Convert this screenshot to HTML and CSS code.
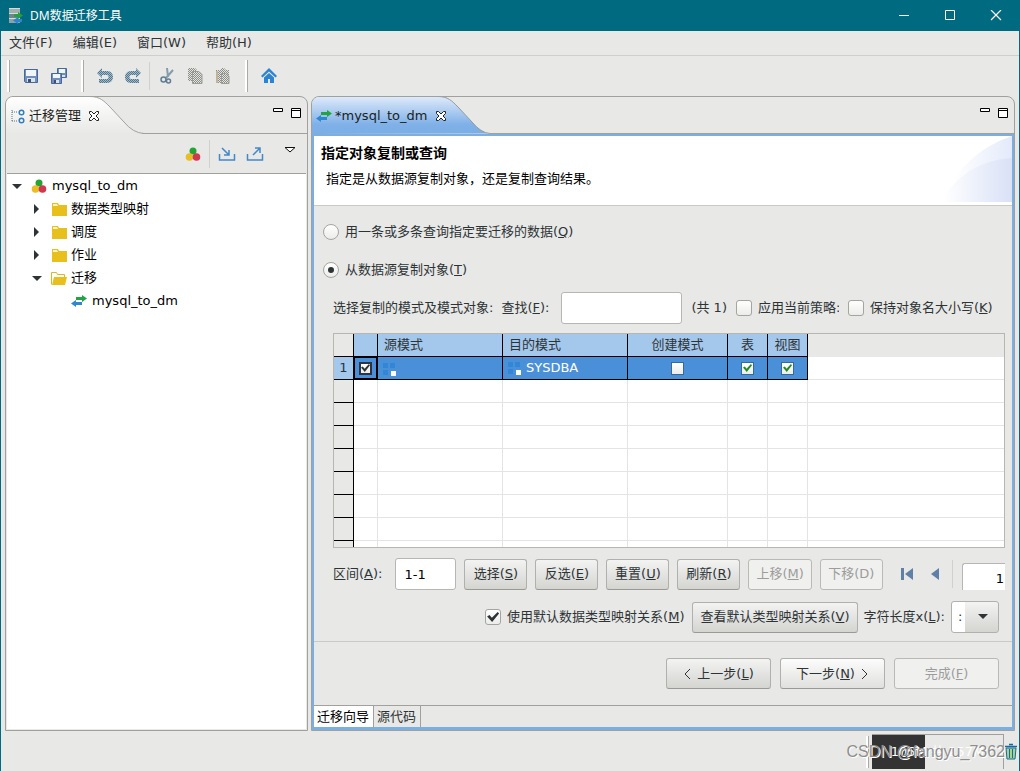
FILE: index.html
```html
<!DOCTYPE html>
<html lang="zh-CN">
<head>
<meta charset="utf-8">
<title>DM数据迁移工具</title>
<link rel="stylesheet" href="styles.css">
</head>
<body>
<header class="titlebar">
  <svg class="app-icon" width="16" height="18" viewBox="0 0 16 18"><path d="M1 1h11v5H1z" fill="#9fb0b0"/><path d="M1 6h11v5H1z" fill="#70848a"/><path d="M1 11h11v5H1z" fill="#8ea3a8"/><path d="M1 1h11v1H1zM1 6h11v1H1zM1 11h11v1H1z" fill="#d5dcdc"/><path d="M6 7h4V5l5 3.500-5 3.500v-2H6z" fill="#25a03c"/><path d="M14 12h-4v-2l-5 3.500 5 3.500v-2h4z" fill="#2e83cf"/></svg>
  <h1>DM数据迁移工具</h1>
  <div class="window-buttons">
    <button aria-label="最小化"><svg width="12" height="12"><path d="M1 5.500h10" stroke="#fff"/></svg></button>
    <button aria-label="最大化"><svg width="12" height="12"><path d="M1.500.500h9v9h-9z" fill="none" stroke="#fff"/></svg></button>
    <button aria-label="关闭"><svg width="12" height="12"><path d="M1 0l10 10M11 0L1 10" stroke="#fff" stroke-width="1.200"/></svg></button>
  </div>
</header>
<nav class="menubar">
  <button>文件(F)</button><button>编辑(E)</button><button>窗口(W)</button><button>帮助(H)</button>
</nav>
<div class="toolbar">
  <span class="grip"></span>
  <div class="tools">
    <button aria-label="保存"><svg width="16" height="16"><path d="M1.500 1.500h13v13h-12l-1-1z" fill="#6f8fbe" stroke="#4b6798"/><path d="M3 2h10v6H3z" fill="#f0f5fa"/><path d="M4 10h8v4H4z" fill="#dbe3ea"/><path d="M5 11h3v3H5z" fill="#3d5273"/></svg></button>
    <button aria-label="全部保存"><svg width="18" height="16"><path d="M7.500.500h9v9h-9z" fill="#6f8fbe" stroke="#4b6798"/><path d="M9 1h6v4H9z" fill="#f0f5fa"/><path d="M12 7h3v2h-3z" fill="#dbe3ea"/><path d="M1.500 5.500h10v10h-10z" fill="#6f8fbe" stroke="#4b6798"/><path d="M3 6h7v4H3z" fill="#f0f5fa"/><path d="M4 12h5v3H4z" fill="#dbe3ea"/><path d="M4 12h2v3H4z" fill="#3d5273"/></svg></button>
  </div>
  <span class="grip"></span>
  <div class="tools">
    <button aria-label="撤销"><svg width="18" height="16"><defs><pattern id="dim-blue" width="2" height="2" patternUnits="userSpaceOnUse"><path d="M0 0h2v2H0z" fill="#a4b9c5"/><path d="M0 0h1v1H0zM1 1h1v1H1z" fill="#4f7890"/></pattern><pattern id="dim-gray" width="2" height="2" patternUnits="userSpaceOnUse"><path d="M0 0h2v2H0z" fill="#e4e4df"/><path d="M0 0h1v1H0zM1 1h1v1H1z" fill="#8b8d89"/></pattern></defs><path d="M1 5l5-5v3h5c8 0 8 12 0 12H3v-4h8c2 0 2-4 0-4H6v3z" fill="url(#dim-blue)"/></svg></button>
    <button aria-label="重做"><svg width="18" height="16"><path d="M17 5l-5-5v3H7c-8 0-8 12 0 12h8v-4H7c-2 0-2-4 0-4h5v3z" fill="url(#dim-blue)"/></svg></button>
  </div>
  <span class="divider"></span>
  <div class="tools">
    <button aria-label="剪切"><svg width="16" height="18"><path d="M8 1l1 9M14 3l-7 8" stroke="#849cac" stroke-width="2"/><circle cx="4.500" cy="12.500" r="2.500" fill="none" stroke="#627c92" stroke-width="1.500"/><circle cx="9.500" cy="14" r="2" fill="none" stroke="#627c92" stroke-width="1.500"/></svg></button>
    <button aria-label="复制"><svg width="18" height="18"><path d="M2 1h7l2 2v11H2z" fill="url(#dim-gray)"/><path d="M6.500 4.500H13l3 3v9H6.500z" fill="url(#dim-gray)" stroke="#9a9c98"/></svg></button>
    <button aria-label="粘贴"><svg width="16" height="18"><path d="M1 3h4l2-2h2l2 2h3v13H1z" fill="url(#dim-gray)"/><path d="M6.500 6.500H11l3 3v7H6.500z" fill="url(#dim-gray)" stroke="#9a9c98"/><path d="M1 4h2v12H1z" fill="#c1b29b"/></svg></button>
  </div>
  <span class="grip"></span>
  <div class="tools">
    <button aria-label="主页"><svg width="18" height="16"><path d="M1 8l8-8 8 8-1.500 1.500L9 3.500 2.500 9.500z" fill="#2b83d3"/><path d="M4 9.500l5-4.500 5 4.500V15h-4v-4H8v4H4z" fill="#2b83d3"/></svg></button>
  </div>
</div>

<main class="workbench">
  <section class="view">
    <div class="tabs-row">
      <div class="view-tab">
        <svg class="tab-shape" width="138" height="38"><defs><linearGradient id="pale" x2="0" y2="1"><stop offset="0" stop-color="#fff"/><stop offset="1" stop-color="#e8e8e6"/></linearGradient></defs><path d="M0 38V7Q1 1 7 .5H84C94 .5 98 5 104 11L118 26Q127 37 138 37.500z" fill="url(#pale)"/><path d="M84 .5C94 .5 98 5 104 11L118 26Q127 37 138 37.500" fill="none" stroke="#a0a09c"/></svg>
        <svg width="14" height="16"><path d="M1 2v11M1 4h6M1 13h6" fill="none" stroke="#59708a" stroke-dasharray="1 1"/><g fill="none" stroke="#327fc5" stroke-width="1.500"><circle cx="10.500" cy="4.500" r="2.300"/><circle cx="10.500" cy="12.500" r="2.300"/></g></svg>
        <span>迁移管理</span>
        <button aria-label="关闭视图"><svg width="12" height="12"><path d="M1.500 1.500h2L6 4l2.500-2.500h2v2L8 6l2.500 2.500v2h-2L6 8l-2.500 2.500h-2v-2L4 6 1.500 3.500z" fill="#fff" stroke="#222"/></svg></button>
      </div>
      <div class="tab-fill">
        <button aria-label="最小化视图"><svg width="10" height="12"><path d="M.5 1.500h9v3h-9z" fill="#fff" stroke="#000"/></svg></button>
        <button aria-label="最大化视图"><svg width="10" height="12"><path d="M.5 1.500h9v9h-9zM0 3.500h10" fill="#fff" stroke="#000"/></svg></button>
      </div>
    </div>
    <div class="view-tools">
      <button aria-label="对象"><svg width="16" height="16"><circle cx="8" cy="5" r="3.500" fill="#23a536"/><circle cx="4.500" cy="11" r="3.800" fill="#e8bd25"/><circle cx="11.500" cy="11" r="3.800" fill="#cf384e"/></svg></button>
      <span class="divider short"></span>
      <button aria-label="导入"><svg width="18" height="16"><path d="M1.500 8v6h15V8M4 2l7 7M11 4v5H6" fill="none" stroke="#4389c8" stroke-width="1.500"/></svg></button>
      <button aria-label="导出"><svg width="18" height="16"><path d="M1.500 8v6h15V8M7 9l7-7M9 2h5v5" fill="none" stroke="#4389c8" stroke-width="1.500"/></svg></button>
      <button class="view-menu" aria-label="视图菜单"><svg width="12" height="8"><path d="M1 1.500h10L6 6z" fill="#fff" stroke="#111"/></svg></button>
    </div>
    <ul class="tree">
      <li><svg class="arrow" width="10" height="10"><path d="M0 3h10L5 8z"/></svg><svg width="16" height="16"><circle cx="8" cy="5" r="3.500" fill="#23a536"/><circle cx="4.500" cy="11" r="3.800" fill="#e8bd25"/><circle cx="11.500" cy="11" r="3.800" fill="#cf384e"/></svg><span>mysql_to_dm</span></li>
      <li class="level-2"><svg class="arrow" width="10" height="10"><path d="M2 0v10l5-5z"/></svg><svg width="16" height="16"><path d="M1 2h6l1 2h8v11H1z" fill="#e7c01e"/><path d="M2 3h4l1 2H2z" fill="#fff5c5"/></svg><span>数据类型映射</span></li>
      <li class="level-2"><svg class="arrow" width="10" height="10"><path d="M2 0v10l5-5z"/></svg><svg width="16" height="16"><path d="M1 2h6l1 2h8v11H1z" fill="#e7c01e"/><path d="M2 3h4l1 2H2z" fill="#fff5c5"/></svg><span>调度</span></li>
      <li class="level-2"><svg class="arrow" width="10" height="10"><path d="M2 0v10l5-5z"/></svg><svg width="16" height="16"><path d="M1 2h6l1 2h8v11H1z" fill="#e7c01e"/><path d="M2 3h4l1 2H2z" fill="#fff5c5"/></svg><span>作业</span></li>
      <li class="level-2"><svg class="arrow" width="10" height="10"><path d="M0 3h10L5 8z"/></svg><svg width="16" height="16"><path d="M.5 14.500v-12h5l1 2h7v3" fill="#fff" stroke="#e0b622"/><path d="M3 7h13l-2 8H1z" fill="#e7c01e"/></svg><span>迁移</span></li>
      <li class="level-3"><svg width="16" height="16"><path d="M5 4h6V2l5 3.500L11 9V7H5z" fill="#22a344"/><path d="M11 9H5V7l-5 3.500L5 14v-2h6z" fill="#2e88cf"/></svg><span>mysql_to_dm</span></li>
    </ul>
  </section>

  <section class="view editor">
    <div class="tabs-row">
      <div class="view-tab active">
        <svg class="tab-shape" width="178" height="38"><defs><linearGradient id="sky" x2="0" y2="1"><stop offset="0" stop-color="#dfeafa"/><stop offset=".75" stop-color="#7fb0e8"/><stop offset="1" stop-color="#7caee6"/></linearGradient></defs><path d="M0 38V7Q1 1 7 .5H126C136 .5 140 5 146 11L160 26Q169 37 178 37.500z" fill="url(#sky)"/><path d="M126 .5C136 .5 140 5 146 11L160 26Q169 37 178 37.500" fill="none" stroke="#909aa4"/></svg>
        <svg width="16" height="16"><path d="M5 4h6V2l5 3.500L11 9V7H5z" fill="#22a344"/><path d="M11 9H5V7l-5 3.500L5 14v-2h6z" fill="#2e88cf"/></svg>
        <span>*mysql_to_dm</span>
        <button aria-label="关闭编辑器"><svg width="12" height="12"><path d="M1.500 1.500h2L6 4l2.500-2.500h2v2L8 6l2.500 2.500v2h-2L6 8l-2.500 2.500h-2v-2L4 6 1.500 3.500z" fill="#fff" stroke="#222"/></svg></button>
      </div>
      <div class="tab-fill">
        <button aria-label="最小化编辑器"><svg width="10" height="12"><path d="M.5 1.500h9v3h-9z" fill="#fff" stroke="#000"/></svg></button>
        <button aria-label="最大化编辑器"><svg width="10" height="12"><path d="M.5 1.500h9v9h-9zM0 3.500h10" fill="#fff" stroke="#000"/></svg></button>
      </div>
    </div>
    <div class="editor-body">
      <div class="banner">
        <div>
          <h2>指定对象复制或查询</h2>
          <p>指定是从数据源复制对象，还是复制查询结果。</p>
        </div>
        <svg width="72" height="66"><defs><linearGradient id="haze"><stop offset=".2" stop-color="#fff"/><stop offset="1" stop-color="#e3eafa"/></linearGradient><linearGradient id="haze2"><stop offset=".05" stop-color="#fff"/><stop offset="1" stop-color="#d9e1f6"/></linearGradient></defs><path d="M0 66Q25 15 72 0V66z" fill="url(#haze)"/><path d="M0 66Q25 25 72 22V66z" fill="url(#haze2)"/></svg>
      </div>
      <form class="wizard" onsubmit="return false">
        <div class="row option"><input type="radio" name="mode" id="by-query"><label for="by-query">用一条或多条查询指定要迁移的数据(<u>Q</u>)</label></div>
        <div class="row option second"><input type="radio" name="mode" id="by-object" checked><label for="by-object">从数据源复制对象(<u>T</u>)</label></div>
        <div class="row find indent">
          <span class="caption">选择复制的模式及模式对象:</span>
          <label for="find">查找(<u>F</u>):</label>
          <input type="text" id="find">
          <span class="total">(共 1)</span>
          <input type="checkbox" id="policy"><label class="clip" for="policy">应用当前策略:</label>
          <input type="checkbox" id="keep-case"><label for="keep-case">保持对象名大小写(<u>K</u>)</label>
        </div>
        <div class="grid indent">
          <table>
            <colgroup><col class="c-num"><col class="c-check"><col class="c-name"><col class="c-name"><col class="c-create"><col class="c-flag"><col class="c-flag"><col></colgroup>
            <thead><tr><th></th><th></th><th class="left">源模式</th><th class="left">目的模式</th><th>创建模式</th><th>表</th><th>视图</th><th class="blank"></th></tr></thead>
            <tbody>
              <tr class="selected"><th>1</th><td class="focus"><input type="checkbox" aria-label="选择行" checked></td>
                <td class="left"><svg width="16" height="16"><path d="M1 2h5v5H1zM8 2h5v5H8zM1 9h5v5H1z" fill="#3286d8"/><path d="M9 10h5v5H9z" fill="#fff"/></svg></td>
                <td class="left"><svg width="16" height="16"><path d="M1 2h5v5H1zM8 2h5v5H8zM1 9h5v5H1z" fill="#3286d8"/><path d="M9 10h5v5H9z" fill="#fff"/></svg><span>SYSDBA</span></td>
                <td><input type="checkbox" aria-label="创建模式"></td><td><input type="checkbox" class="green" aria-label="表" checked></td><td><input type="checkbox" class="green" aria-label="视图" checked></td><td></td></tr>
              <tr><th></th><td></td><td></td><td></td><td></td><td></td><td></td><td></td></tr>
              <tr><th></th><td></td><td></td><td></td><td></td><td></td><td></td><td></td></tr>
              <tr><th></th><td></td><td></td><td></td><td></td><td></td><td></td><td></td></tr>
              <tr><th></th><td></td><td></td><td></td><td></td><td></td><td></td><td></td></tr>
              <tr><th></th><td></td><td></td><td></td><td></td><td></td><td></td><td></td></tr>
              <tr><th></th><td></td><td></td><td></td><td></td><td></td><td></td><td></td></tr>
              <tr><th></th><td></td><td></td><td></td><td></td><td></td><td></td><td></td></tr>
              <tr><th></th><td></td><td></td><td></td><td></td><td></td><td></td><td></td></tr>
            </tbody>
          </table>
        </div>
        <div class="row range indent">
          <label for="range">区间(<u>A</u>):</label>
          <input type="text" id="range" value="1-1">
          <button class="btn">选择(<u>S</u>)</button>
          <button class="btn">反选(<u>E</u>)</button>
          <button class="btn">重置(<u>U</u>)</button>
          <button class="btn">刷新(<u>R</u>)</button>
          <button class="btn" disabled>上移(<u>M</u>)</button>
          <button class="btn" disabled>下移(D)</button>
          <div class="pager">
            <button aria-label="首页"><svg width="14" height="12"><path d="M1 0h3v12H1zM13 0v12L5 6z" fill="#5f80a8"/></svg></button>
            <button aria-label="上一页"><svg width="14" height="12"><path d="M11 0v12L3 6z" fill="#5f80a8"/></svg></button>
            <span class="divider"></span>
            <input type="text" class="page" aria-label="页码" value="1">
          </div>
        </div>
        <div class="row mapping">
          <input type="checkbox" id="default-map" checked><label for="default-map">使用默认数据类型映射关系(<u>M</u>)</label>
          <button class="btn">查看默认类型映射关系(<u>V</u>)</button>
          <label for="length">字符长度x(<u>L</u>):</label>
          <span class="combo"><select id="length"><option>:</option></select><svg width="10" height="6"><path d="M0 0h10L5 5z" fill="#2e3436"/></svg></span>
        </div>
        <div class="actions">
          <button class="btn"><svg width="8" height="12"><path d="M7 1L2 6l5 5" fill="none" stroke="#2e3436"/></svg><span>上一步(<u>L</u>)</span></button>
          <button class="btn bright"><span>下一步(<u>N</u>)</span><svg width="8" height="12"><path d="M1 1l5 5-5 5" fill="none" stroke="#2e3436"/></svg></button>
          <button class="btn" disabled><span>完成(<u>F</u>)</span></button>
        </div>
      </form>
      <div class="page-tabs"><button class="current">迁移向导</button><button>源代码</button></div>
    </div>
  </section>
</main>

<footer class="status">
  <span class="grip"></span>
  <div class="heap"><span>105M 共 257M</span></div>
  <button aria-label="回收内存"><svg width="14" height="18"><path d="M2 5h10l-1 11H3z" fill="#a8d38c" stroke="#17699e"/><path d="M1 3.500h12M5 1.500h4" stroke="#17699e" stroke-width="1.500"/><path d="M5.500 6v9M8.500 6v9" stroke="#17699e"/></svg></button>
  <span class="watermark">CSDN @fangyu_7362</span>
</footer>
</body>
</html>
```
FILE: styles.css
```css
* { box-sizing: border-box; }
body {
  margin: 0;
  min-height: 100vh;
  display: flex;
  flex-direction: column;
  background: #e8e8e6;
  border: solid #006a80;
  border-width: 0 1px 1px;
  color: #2e3436;
  font: 13px/20px "DejaVu Sans", "Noto Sans CJK SC", sans-serif;
  white-space: nowrap;
}
button, input, select { font: inherit; color: inherit; margin: 0; }
button { border: 0; padding: 0; background: none; }
svg { display: block; flex: none; }
h1, h2, p, ul { margin: 0; padding: 0; }

.titlebar { height: 31px; background: #006a80; color: #fff; display: flex; align-items: center; padding-left: 7px; gap: 6px; }
.titlebar h1 { font: 12px/20px "Noto Sans", "Noto Sans CJK SC", sans-serif; }
.window-buttons { margin-left: auto; display: flex; }
.window-buttons button { width: 46px; height: 31px; display: grid; place-items: center; }

.menubar { height: 25px; border-bottom: 1px solid #cfcfcc; padding-left: 8px; display: flex; align-items: center; gap: 20px; }

.toolbar { height: 40px; display: flex; align-items: center; padding-left: 6px; }
.grip { width: 3px; height: 32px; border-left: 2px solid #fff; border-right: 1px solid #a9a9a6; }
.divider { width: 1px; height: 28px; background: #d0d0cd; }
.divider.short { margin: 0 8px 0 8px; }
.tools { display: flex; align-items: center; gap: 10px; padding: 0 13px 0 12px; }
.tools button { width: 18px; display: grid; place-items: center; }
.divider + .tools { padding-left: 8px; }
.tools:has(+ .divider) { padding-right: 7px; }

.workbench { flex: 1; display: grid; grid-template-columns: 303px minmax(0, 1fr); gap: 3px; padding: 0 4px 1px; }
.view { display: flex; flex-direction: column; border: 1px solid #a0a09c; border-radius: 8px 8px 0 0; overflow: hidden; }
.tabs-row { height: 37px; display: flex; }
.view-tab { position: relative; display: flex; align-items: center; width: 136px; padding-left: 5px; gap: 4px; color: #1b1f20; }
.view-tab > * { position: relative; }
.view-tab > .tab-shape { position: absolute; left: 0; top: -1px; }
.view-tab button { margin-left: 3px; }
.view-tab.active { width: 178px; padding-left: 4px; gap: 3px; }
.view-tab.active button { margin-left: 5px; }
.tab-fill { flex: 1; border-bottom: 1px solid #a0a09c; display: flex; justify-content: flex-end; gap: 8px; padding: 10px 6px 0 0; align-items: flex-start; }
.view-tools { height: 40px; display: flex; align-items: center; justify-content: flex-end; padding-right: 10px; margin: 0 1px; border-bottom: 1px solid #a0a09c; }
.view-tools button + button { margin-left: 10px; }
.view-tools .view-menu { margin: 0 0 8px 20px; }
.tree { flex: 1; margin: 0 1px 1px; background: #fff; list-style: none; color: #000; }
.tree li { height: 23px; display: flex; align-items: center; padding-left: 5px; gap: 5px; }
.tree .arrow { fill: #2e3436; margin-right: 4px; }
.tree li.level-2 { padding-left: 25px; gap: 4px; }
.tree li.level-2 .arrow { margin-right: 5px; }
.tree li.level-3 { padding-left: 64px; }

.editor-body { flex: 1; display: flex; flex-direction: column; border: solid #7caee0; border-width: 2px 2px 3px; }
.banner { height: 70px; background: #fff; border-bottom: 1px solid #c9c9c6; display: flex; justify-content: space-between; color: #000; padding: 7px 0 0 7px; }
.banner h2 { font-size: 14px; line-height: 20px; font-weight: bold; }
.banner p { padding: 6px 0 0 5px; }
.banner svg { margin-top: -7px; }
.wizard { flex: 1; display: flex; flex-direction: column; padding-top: 16px; }
.row { display: flex; align-items: center; }
.indent { margin: 0 7px 0 19px; }
.option { height: 20px; padding-left: 9px; gap: 6px; }
.option.second { margin: 18px 0 12px; }

input[type="radio"], input[type="checkbox"] {
  appearance: none; flex: none; width: 16px; height: 16px;
  border: 1px solid #a4a4a0; border-radius: 3px;
  background: linear-gradient(#fff, #ececea);
  display: grid; place-items: center;
}
input[type="radio"] { border-radius: 50%; }
input[type="radio"]:checked::before { content: ""; width: 6px; height: 6px; border-radius: 50%; background: #2e3436; }
input[type="checkbox"]:checked::before {
  content: ""; width: 12px; height: 10px; background: #2e3436;
  clip-path: polygon(0 45%, 20% 30%, 40% 58%, 88% 0, 100% 16%, 42% 100%);
}
input[type="text"] { height: 32px; border: 1px solid #b6b6b3; border-radius: 3px; background: #fff; color: #000; padding: 0 8px; }

.find { height: 32px; }
.caption { margin-right: 8px; }
.find input[type="text"] { width: 121px; margin: 0 9px 0 12px; }
.find input[type="checkbox"] { margin: 0 6px 0 9px; }
.clip { width: 81px; overflow: hidden; }

.grid { flex: 1 1 215px; height: 215px; margin-top: 9px; border: 1px solid #b6b6b3; background: #fff; overflow: hidden; contain: size; }
table { width: 100%; table-layout: fixed; border-collapse: separate; border-spacing: 0; }
.c-num { width: 20px; }
.c-check { width: 24px; }
.c-name { width: 125px; }
.c-create { width: 100px; }
.c-flag { width: 40px; }
th, td { height: 23px; padding: 0; font-weight: normal; line-height: 20px; text-align: center; border: solid #e4e4e2; border-width: 0 1px 1px 0; }
th { background: #e8e8e6; border-color: #000; }
td:last-child { border-right: 0; }
thead th { background: #a4c7ec; }
thead th:first-child { background: #e8e8e6; }
thead th.blank { background: #e8e8e6; border-color: #e8e8e6; border-right: 0; }
th.left { text-align: left; padding-left: 6px; }
.selected th { background: #a4c7ec; }
.selected td { background: #4a90d9; border-color: #000; color: #fff; }
.selected td:last-child { background: #fff; border-color: #e4e4e2; }
.selected .focus { box-shadow: inset 0 0 0 1px #000; }
td.left { text-align: left; padding-left: 4px; }
td.left svg { display: inline-block; vertical-align: middle; }
td.left span { padding-left: 3px; vertical-align: middle; }
td input[type="checkbox"] { width: 13px; height: 13px; border: 1px solid #356a9c; border-radius: 0; margin: 0 auto; }
td input[type="checkbox"]:checked::before { width: 9px; height: 8px; }
td input.green[type="checkbox"]:checked::before { background: #228b22; }
.focus input[type="checkbox"] { border: 2px solid #2b3444; }

.range { height: 32px; margin-top: 10px; }
.range > input { width: 61px; margin: 0 8px 0 13px; }
.btn {
  height: 31px; border: 1px solid #b0b0ac; border-bottom-color: #999995; border-radius: 3px; padding: 0 7px;
  background: linear-gradient(#f3f3f2, #d4d4d1);
  display: flex; align-items: center; justify-content: center;
}
.btn:disabled { background: #f0f0ee; color: #9b9d9c; border-color: #b9b9b6; }
.btn.bright { background: linear-gradient(#fcfcfc, #e0e0de); }
.range .btn { margin-right: 8px; min-width: 63px; }
.pager { flex: 1; height: 32px; display: flex; align-items: center; overflow: hidden; }
.pager button { margin-left: 9px; }
.pager button + button { margin-left: 14px; }
.pager .divider { margin: 0 9px 0 10px; }
.pager .page { flex: 1; min-width: 0; height: 31px; align-self: flex-start; margin-top: 5px; padding: 0 1px; text-align: right; border-right: 0; border-radius: 3px 0 0 0; }

.mapping { height: 32px; margin: 11px 13px 8px; justify-content: flex-end; gap: 6px; }
.mapping .btn { margin-left: 2px; }
.combo { display: grid; grid-template-columns: 15px 33px; align-items: center; }
.combo select {
  grid-area: 1 / 1 / 2 / 3; appearance: none; height: 32px; padding: 0 0 0 6px; border: 1px solid #b0b0ac; border-radius: 3px;
  background: linear-gradient(#f3f3f2, #d4d4d1) right / 33px 100% no-repeat #fff;
}
.combo svg { grid-area: 1 / 2; justify-self: center; pointer-events: none; }

.actions { display: flex; justify-content: flex-end; gap: 9px; padding: 16px 13px; border-top: 1px solid #c9c9c6; }
.actions .btn { width: 105px; gap: 6px; }
.page-tabs { height: 22px; display: flex; border-top: 1px solid #a0a09c; }
.page-tabs button { padding: 0 4px 0 3px; border-right: 1px solid #a0a09c; }
.page-tabs .current { background: #fff; color: #000; }

.status { position: relative; height: 39px; display: flex; justify-content: flex-end; align-items: center; }
.heap { width: 132px; height: 35px; margin-left: 3px; border: solid #a0a09c; border-width: 1px 1px 0 0; background: linear-gradient(#333, #333) left / 53px 100% no-repeat; color: #fff; display: grid; place-items: center; }
.status button { width: 15px; }
.watermark { position: absolute; right: 14px; top: 8px; font: 16px/24px "Liberation Sans", sans-serif; color: #8e8e8e; text-shadow: 1px 1px 0 #fff; }
```
